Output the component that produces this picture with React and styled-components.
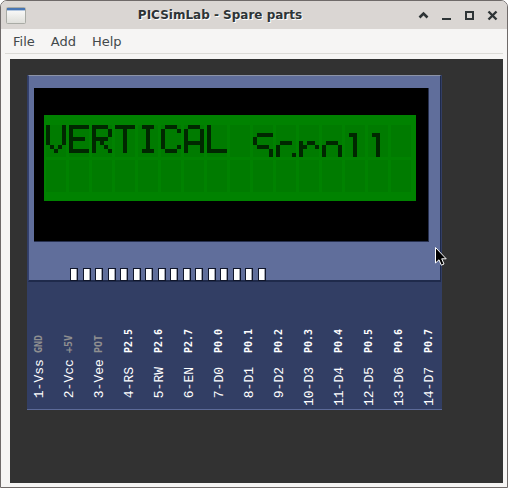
import React from "react";
import styled, { createGlobalStyle } from "styled-components";

const GlobalStyle = createGlobalStyle`
  *, *::before, *::after { box-sizing: border-box; }
  body { margin: 0; background: #ffffff; }
`;

const Window = styled.div`
  position: relative;
  display: flex;
  flex-direction: column;
  min-height: 100vh;
  border: 1px solid #6f6a69;
  border-radius: 7px 7px 0 0;
  background: #f6f5f4;
  color: #2e3436;
  font-family: "DejaVu Sans", sans-serif;
  overflow: hidden;
`;

const TitleBar = styled.header`
  display: grid;
  grid-template-columns: 92px 1fr 92px;
  align-items: center;
  height: 28px;
  padding: 0 3px;
  background: #dad6d3;
`;

const Title = styled.h1`
  margin: 0;
  padding-right: 68px;
  font-size: 12px;
  line-height: 28px;
  font-weight: bold;
  text-align: center;
  white-space: nowrap;
  text-shadow: 1px 1px 0 #ffffff;
`;

const Controls = styled.div`
  display: flex;
  justify-content: flex-end;
`;

const ControlButton = styled.button`
  display: flex;
  align-items: center;
  justify-content: center;
  width: 23px;
  height: 24px;
  flex: none;
  padding: 0;
  border: 0;
  background: none;
  color: #2e3436;
`;

const MenuBar = styled.nav`
  display: flex;
  height: 25px;
  margin: 0 4px;
  border-bottom: 1px solid #dcdbd7;
`;

const MenuButton = styled.button`
  padding: 2px 8px 0;
  border: 0;
  background: none;
  color: #42494b;
  font: 13px/22px "DejaVu Sans", sans-serif;
`;

const Workspace = styled.main`
  flex: 1;
  margin: 5px 4px 4px 9px;
  padding: 16px 17px;
  background: #323232;
`;

const Board = styled.section`
  width: 415px;
  background: #323e64;
  border-bottom: 1px solid #5c6a98;
`;

const Module = styled.div`
  margin: 0 1px;
  height: 207px;
  padding: 12px 11px 0 5px;
  border: solid #1f2a4b;
  border-width: 1px 1px 2px 1px;
  border-top-color: #8c93a6;
  border-left-color: #34416e;
  background: #606e9b;
`;

const Bezel = styled.div`
  height: 154px;
  padding: 27px 10px;
  border: 1px solid #27304f;
  border-width: 0 1px 1px 0;
  background: #000000;
`;

const Screen = styled.svg`
  display: block;
  width: 372px;
  height: 86px;
`;

const Pins = styled.div`
  display: flex;
  justify-content: space-between;
  width: 196px;
  margin: 26px 0 0 36px;
`;

const Pin = styled.span`
  width: 8px;
  height: 13px;
  border: 1px solid #10162a;
  background: #ffffff;
  box-shadow: inset -1px 0 0 #a2a5ae;
`;

const Connections = styled.ul`
  display: flex;
  justify-content: space-between;
  list-style: none;
  margin: 0 4px 0 5px;
  padding: 39px 0 3px;
`;

const Connection = styled.li`
  display: flex;
  flex-direction: column;
  align-items: flex-start;
  width: 16px;
`;

const VerticalText = styled.span`
  writing-mode: vertical-rl;
  transform: rotate(180deg);
  white-space: pre;
`;

const Signal = styled(VerticalText)`
  height: 32px;
  color: ${(p) => (p.$muted ? "#8f8f90" : "#ffffff")};
  font: bold 10px/14px "DejaVu Sans Mono", monospace;
`;

const PinName = styled(VerticalText)`
  height: 53px;
  color: #ffffff;
  font: 13px/16px "Liberation Mono", monospace;
`;

const Pointer = styled.svg`
  position: absolute;
  left: 433px;
  top: 245px;
`;

const GLYPHS = {
  V: ["10001", "10001", "10001", "10001", "10001", "01010", "00100"],
  E: ["11111", "10000", "10000", "11110", "10000", "10000", "11111"],
  R: ["11110", "10001", "10001", "11110", "10100", "10010", "10001"],
  T: ["11111", "00100", "00100", "00100", "00100", "00100", "00100"],
  I: ["01110", "00100", "00100", "00100", "00100", "00100", "01110"],
  C: ["01110", "10001", "10000", "10000", "10000", "10001", "01110"],
  A: ["01110", "10001", "10001", "10001", "11111", "10001", "10001"],
  L: ["10000", "10000", "10000", "10000", "10000", "10000", "11111"],
  S: ["01111", "10000", "10000", "01110", "00001", "00001", "11110"],
  c: ["00000", "00000", "01110", "10000", "10000", "10001", "01110"],
  r: ["00000", "00000", "10110", "11001", "10000", "10000", "10000"],
  o: ["00000", "00000", "01110", "10001", "10001", "10001", "01110"],
  l: ["01100", "00100", "00100", "00100", "00100", "00100", "01110"],
};

const LINE = "VERTICAL Scroll ";
const SCROLL_START = 9;
const SCROLL_ROWS = 2;
const CELL_ROWS = 8;
const DOT = 4;

function litDots(char, column) {
  const shift = column >= SCROLL_START ? SCROLL_ROWS : 0;
  return (GLYPHS[char] || []).flatMap((bits, row) =>
    row + shift < CELL_ROWS
      ? [...bits].flatMap((bit, x) => (bit === "1" ? [[x, row + shift]] : []))
      : []
  );
}

function CharacterDisplay() {
  return (
    <Screen viewBox="0 0 372 86" role="img" aria-label="VERTICAL Scroll" shapeRendering="crispEdges">
      <rect width="372" height="86" fill="#008200" />
      {[...LINE].map((char, column) => (
        <g key={column} transform={`translate(${2 + column * 23} 10)`}>
          <rect width="20" height="32" fill="#007b00" />
          <rect y="35" width="20" height="32" fill="#007b00" />
          {litDots(char, column).map(([x, y]) => (
            <rect key={`${x}-${y}`} x={x * DOT} y={y * DOT} width={DOT} height={DOT} fill="#002800" />
          ))}
        </g>
      ))}
    </Screen>
  );
}

const CONNECTIONS = [
  [" 1-Vss", "GND"],
  [" 2-Vcc", "+5V"],
  [" 3-Vee", "POT"],
  [" 4-RS", "P2.5"],
  [" 5-RW", "P2.6"],
  [" 6-EN", "P2.7"],
  [" 7-D0", "P0.0"],
  [" 8-D1", "P0.1"],
  [" 9-D2", "P0.2"],
  ["10-D3", "P0.3"],
  ["11-D4", "P0.4"],
  ["12-D5", "P0.5"],
  ["13-D6", "P0.6"],
  ["14-D7", "P0.7"],
];

const CONTROLS = [
  { label: "Roll up", icon: <path d="M1.5 7.5 5.5 3.5 9.5 7.5" strokeWidth="2.6" /> },
  { label: "Minimize", icon: <path d="M1 9H10" strokeWidth="2" /> },
  { label: "Maximize", icon: <rect x="2" y="2" width="7" height="7" strokeWidth="2" /> },
  { label: "Close", icon: <path d="M1.5 1.5 9.5 9.5M9.5 1.5 1.5 9.5" strokeWidth="2.4" /> },
];

function WindowIcon() {
  return (
    <svg width="22" height="20" viewBox="0 0 22 20" aria-hidden="true">
      <defs>
        <linearGradient id="panel" x1="0" y1="0" x2="0" y2="1">
          <stop offset="0" stopColor="#ffffff" />
          <stop offset="1" stopColor="#deded9" />
        </linearGradient>
      </defs>
      <rect x="2.5" y="2.5" width="19" height="16" rx="1" fill="url(#panel)" stroke="#a9aba5" />
      <rect x="3" y="3" width="18" height="2" fill="#4876b4" />
      <rect x="3" y="5" width="18" height="1" fill="#b4c7df" />
    </svg>
  );
}

export default function App() {
  return (
    <>
      <GlobalStyle />
      <Window>
        <TitleBar>
          <WindowIcon />
          <Title>PICSimLab - Spare parts</Title>
          <Controls>
            {CONTROLS.map(({ label, icon }) => (
              <ControlButton key={label} type="button" aria-label={label}>
                <svg width="11" height="11" viewBox="0 0 11 11" fill="none" stroke="currentColor">
                  {icon}
                </svg>
              </ControlButton>
            ))}
          </Controls>
        </TitleBar>
        <MenuBar>
          {["File", "Add", "Help"].map((name) => (
            <MenuButton key={name} type="button">{name}</MenuButton>
          ))}
        </MenuBar>
        <Workspace>
          <Board>
            <Module>
              <Bezel>
                <CharacterDisplay />
              </Bezel>
              <Pins>
                {Array.from({ length: 16 }, (_, i) => (
                  <Pin key={i} />
                ))}
              </Pins>
            </Module>
            <Connections>
              {CONNECTIONS.map(([name, signal], i) => (
                <Connection key={name}>
                  <Signal $muted={i < 3}>{signal}</Signal>
                  <PinName>{name}</PinName>
                </Connection>
              ))}
            </Connections>
          </Board>
        </Workspace>
        <Pointer width="14" height="22" viewBox="0 0 14 22" aria-hidden="true">
          <path
            d="M1.5 1.5V17L5 13.8 7.3 19.2 10 18 7.7 12.8H12.2Z"
            fill="#000000"
            stroke="#ffffff"
          />
        </Pointer>
      </Window>
    </>
  );
}
